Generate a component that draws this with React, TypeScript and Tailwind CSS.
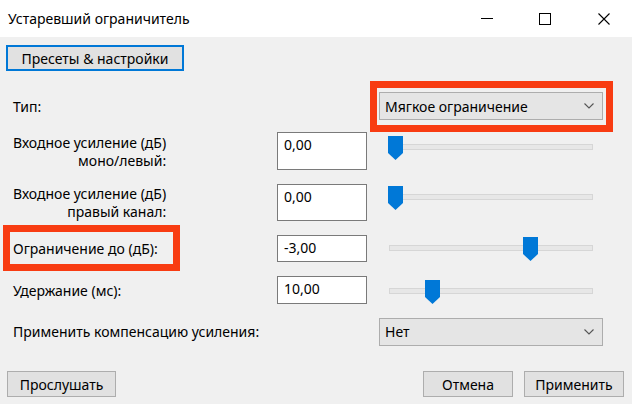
import React from "react";

const font = { fontFamily: '"Noto Sans", "Open Sans", sans-serif' };

function Thumb() {
  return (
    <svg width="15" height="24" viewBox="0 0 15 24" className="block">
      <path d="M0 0 H15 V17 L7.5 24 L0 17 Z" fill="#0078d7" />
    </svg>
  );
}

function Slider({ pos, thumbTop }: { pos: number; thumbTop: string }) {
  return (
    <div className="relative w-[205px] h-[24px] ml-[21px]">
      <div className="absolute left-[1px] right-0 top-[8px] h-[6px] bg-[#e7e7e7] border border-[#d6d6d6]" />
      <div className={`absolute ${thumbTop}`} style={{ left: pos }}>
        <Thumb />
      </div>
    </div>
  );
}

function Chevron() {
  return (
    <svg width="10" height="6" viewBox="0 0 10 6" className="block">
      <path d="M0.5 0.5 L5 5 L9.5 0.5" fill="none" stroke="#555" strokeWidth="1.1" />
    </svg>
  );
}

function Dropdown({ text }: { text: string }) {
  return (
    <div className="w-[224px] h-[28px] bg-[#e5e5e5] border border-[#adadad] flex items-center justify-between pl-[5px] pr-[8px] text-[14px] text-black">
      <span>{text}</span>
      <Chevron />
    </div>
  );
}

function Input({ value, h }: { value: string; h: string }) {
  return (
    <div className={`w-[90px] ${h} bg-white border border-[#7a7a7a] pl-[6px] pt-[3px] text-[14px] leading-[18px] text-black`}>
      {value}
    </div>
  );
}

function Btn({ text, w }: { text: string; w: string }) {
  return (
    <div className={`${w} h-[26px] bg-[#e1e1e1] border border-[#adadad] flex items-center justify-center text-[14px] text-black`}>
      {text}
    </div>
  );
}

export default function App() {
  return (
    <div className="w-[632px] h-[404px] overflow-hidden flex flex-col text-black" style={font}>
      {/* Title bar */}
      <div className="h-[37px] bg-white flex items-center shrink-0">
        <div className="pl-[8px] text-[14px] flex-1">Устаревший ограничитель</div>
        <div className="flex items-center">
          <div className="w-[12px] h-px bg-black mr-[46px]" />
          <div className="w-[12px] h-[12px] border border-black mr-[47px]" />
          <svg width="12" height="12" viewBox="0 0 12 12" className="mr-[22px]">
            <path d="M0.5 0.5 L11.5 11.5 M11.5 0.5 L0.5 11.5" stroke="#000" strokeWidth="1.1" />
          </svg>
        </div>
      </div>

      {/* Body */}
      <div className="flex-1 bg-[#f0f0f0] flex flex-col">
        <div className="pt-[8px] pl-[6px]">
          <div className="w-[178px] h-[26px] bg-[#e1e1e1] border-2 border-[#0078d7] flex items-center justify-center text-[14px]">
            Пресеты &amp; настройки
          </div>
        </div>

        {/* Type row */}
        <div className="mt-[10px] h-[51px] flex items-center">
          <div className="w-[370px] pl-[13px] text-[14px]">Тип:</div>
          <div className="w-[243px] h-[51px] border-[7px] border-[#f83c12] pl-[2px] pt-[4px]">
            <Dropdown text="Мягкое ограничение" />
          </div>
        </div>

        {/* Row 2 */}
        <div className="h-[38px] flex items-start">
          <div className="w-[277px] pl-[13px] pt-[2px]">
            <div className="w-fit text-right text-[14px] leading-[18px]">
              Входное усиление (дБ)
              <br />
              моно/левый:
            </div>
          </div>
          <Input value="0,00" h="h-[38px]" />
          <div className="pt-[4px]">
            <Slider pos={0} thumbTop="top-0" />
          </div>
        </div>

        {/* Row 3 */}
        <div className="mt-[14px] h-[37px] flex items-start">
          <div className="w-[277px] pl-[13px] pt-[1px]">
            <div className="w-fit text-right text-[14px] leading-[18px]">
              Входное усиление (дБ)
              <br />
              правый канал:
            </div>
          </div>
          <Input value="0,00" h="h-[37px]" />
          <div className="pt-[2px]">
            <Slider pos={0} thumbTop="top-0" />
          </div>
        </div>

        {/* Row 4 */}
        <div className="mt-[4px] h-[46px] flex items-center">
          <div className="ml-[3px] w-[177px] h-[46px] border-[7px] border-[#f83c12] pl-[3px] flex items-center text-[14px]">
            Ограничение до (дБ):
          </div>
          <div className="ml-[97px]">
            <Input value="-3,00" h="h-[27px]" />
          </div>
          <div className="pt-[1px]">
            <Slider pos={135} thumbTop="top-0" />
          </div>
        </div>

        {/* Row 5 */}
        <div className="mt-[5px] h-[28px] flex items-center">
          <div className="w-[277px] pl-[13px] text-[14px]">Удержание (мс):</div>
          <Input value="10,00" h="h-[28px]" />
          <div className="pt-[3px]">
            <Slider pos={37} thumbTop="top-0" />
          </div>
        </div>

        {/* Row 6 */}
        <div className="mt-[14px] h-[27px] flex items-center">
          <div className="w-[379px] pl-[13px] text-[14px]">Применить компенсацию усиления:</div>
          <Dropdown text="Нет" />
        </div>

        {/* Buttons */}
        <div className="mt-[26px] flex items-center">
          <div className="ml-[7px]">
            <Btn text="Прослушать" w="w-[109px]" />
          </div>
          <div className="ml-[307px]">
            <Btn text="Отмена" w="w-[90px]" />
          </div>
          <div className="ml-[11px]">
            <Btn text="Применить" w="w-[100px]" />
          </div>
        </div>
      </div>
    </div>
  );
}
